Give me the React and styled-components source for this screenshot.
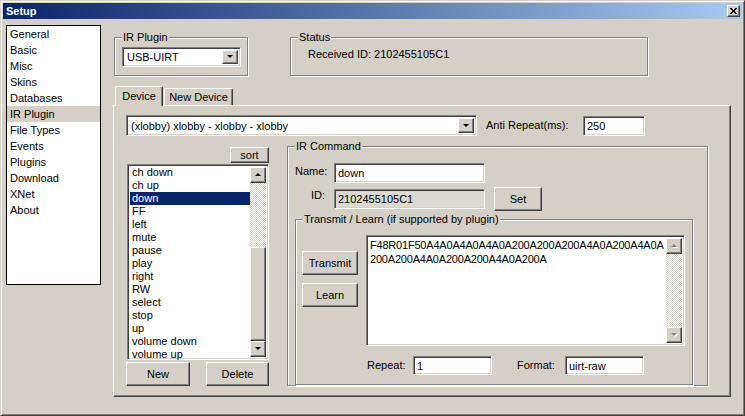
import React from 'react';
import styled, { createGlobalStyle } from 'styled-components';

const GlobalStyle = createGlobalStyle`
  * { box-sizing: border-box; }
  html, body { margin: 0; padding: 0; background: #d4d0c8; }
  body {
    font-family: "Liberation Sans", Arial, sans-serif;
    font-size: 11px;
    color: #000;
  }
`;

const raised = `
  border: 1px solid;
  border-color: #fff #404040 #404040 #fff;
  box-shadow: inset -1px -1px #808080;
  background: #d4d0c8;
`;

const sunken = `
  border: 1px solid;
  border-color: #808080 #fff #fff #808080;
  box-shadow: inset 1px 1px #404040, inset -1px -1px #d4d0c8;
`;

const Window = styled.div`
  width: 745px;
  height: 416px;
  display: flex;
  flex-direction: column;
  padding: 2px;
  border: 1px solid;
  border-color: #d4d0c8 #404040 #404040 #d4d0c8;
  box-shadow: inset 1px 1px #fff, inset -1px -1px #808080;
  background: #d4d0c8;
`;

const TitleBar = styled.div`
  height: 16px;
  display: flex;
  align-items: center;
  justify-content: space-between;
  padding: 0 2px 0 3px;
  background: linear-gradient(to right, #0a246a, #a6caf0);
  color: #fff;
  font-weight: bold;
`;

const CloseButton = styled.div`
  ${raised};
  width: 13px;
  height: 12px;
  display: flex;
  align-items: center;
  justify-content: center;
`;

const Body = styled.div`
  flex: 1;
  display: flex;
  padding: 6px 0 0 3px;
`;

const Nav = styled.div`
  width: 95px;
  height: 260px;
  border: 1px solid #000;
  background: #fff;
`;

const NavItem = styled.div`
  height: 16px;
  line-height: 16px;
  padding-left: 3px;
  background: ${(p) => (p.$active ? '#d4d0c8' : 'transparent')};
  white-space: nowrap;
`;

const Main = styled.div`
  margin-left: 12px;
  width: 618px;
  display: flex;
  flex-direction: column;
`;

const TopRow = styled.div`
  display: flex;
  gap: 42px;
  margin-top: 6px;
  padding-left: 1px;
`;

const Group = styled.fieldset`
  margin: 0;
  padding: 0;
  min-width: 0;
  width: ${(p) => p.$w}px;
  border: 1px solid #808080;
  box-shadow: inset 1px 1px #fff, 1px 1px #fff;
`;

const Legend = styled.legend`
  margin-left: 7px;
  padding: 0 1px;
  line-height: 13px;
  background: #d4d0c8;
`;

const GroupInner = styled.div`
  padding: ${(p) => p.$pad};
`;

const Combo = styled.div`
  ${sunken};
  background: #fff;
  width: ${(p) => p.$w}px;
  height: ${(p) => p.$h}px;
  display: flex;
  align-items: center;
  padding: 2px;
`;

const ComboText = styled.div`
  flex: 1;
  padding-left: 2px;
  white-space: nowrap;
  overflow: hidden;
`;

const ArrowButton = styled.div`
  ${raised};
  width: 16px;
  height: 100%;
  display: flex;
  align-items: center;
  justify-content: center;
`;

const StatusText = styled.div`
  line-height: 13px;
`;

const Tabs = styled.div`
  display: flex;
  align-items: flex-end;
  gap: 1px;
  margin-top: 10px;
  padding-left: 2px;
  position: relative;
  z-index: 1;
`;

const Tab = styled.div`
  width: ${(p) => p.$w}px;
  height: ${(p) => (p.$active ? 20 : 17)}px;
  margin-bottom: ${(p) => (p.$active ? -1 : 0)}px;
  padding-bottom: ${(p) => (p.$active ? 2 : 0)}px;
  display: flex;
  align-items: center;
  justify-content: center;
  background: #d4d0c8;
  border: 1px solid;
  border-bottom: none;
  border-color: #fff #404040 #fff #fff;
  border-radius: 2px 2px 0 0;
  box-shadow: inset -1px 0 #808080;
`;

const Panel = styled.div`
  width: 618px;
  height: 292px;
  padding: 9px 0 0 12px;
  border: 1px solid;
  border-color: #fff #404040 #404040 #fff;
  box-shadow: inset -1px -1px #808080;
`;

const Row = styled.div`
  display: flex;
  align-items: ${(p) => p.$align || 'center'};
  margin-top: ${(p) => p.$mt || 0}px;
`;

const Label = styled.div`
  width: ${(p) => p.$w}px;
  margin-left: ${(p) => p.$ml || 0}px;
  white-space: nowrap;
  line-height: 13px;
`;

const TextBox = styled.div`
  ${sunken};
  width: ${(p) => p.$w}px;
  height: ${(p) => p.$h || 20}px;
  background: ${(p) => (p.$disabled ? '#dcd9d3' : '#fff')};
  padding: 2px 3px;
  line-height: 15px;
  white-space: nowrap;
`;

const Button = styled.div`
  ${raised};
  width: ${(p) => p.$w}px;
  height: ${(p) => p.$h || 24}px;
  display: flex;
  align-items: center;
  justify-content: center;
`;

const LeftColumn = styled.div`
  width: 143px;
  display: flex;
  flex-direction: column;
`;

const SortButton = styled(Button)`
  align-self: flex-end;
  margin-top: 7px;
`;

const ListBox = styled.div`
  ${sunken};
  background: #fff;
  margin: 1px 0 0 1px;
  width: 142px;
  height: 196px;
  padding: 2px;
  display: flex;
`;

const ListItems = styled.div`
  flex: 1;
  margin-top: -1px;
`;

const ListItem = styled.div`
  height: 13px;
  line-height: 13px;
  padding-left: 2px;
  white-space: nowrap;
  background: ${(p) => (p.$selected ? '#0a246a' : 'transparent')};
  color: ${(p) => (p.$selected ? '#fff' : '#000')};
`;

const ScrollBar = styled.div`
  width: 16px;
  display: flex;
  flex-direction: column;
`;

const ScrollButton = styled.div`
  ${raised};
  height: 16px;
  display: flex;
  align-items: center;
  justify-content: center;
`;

const Track = styled.div`
  height: ${(p) => (p.$h ? `${p.$h}px` : 'auto')};
  flex: ${(p) => (p.$h ? 'none' : 1)};
  background: repeating-conic-gradient(#fff 0 25%, #d4d0c8 0 50%) 0 0 / 2px 2px;
`;

const Thumb = styled.div`
  ${raised};
  flex: 1;
`;

const ButtonRow = styled.div`
  display: flex;
  justify-content: space-between;
  margin-top: 2px;
`;

const CommandGrid = styled.div`
  display: grid;
  grid-template-columns: 30px 151px 48px;
  grid-template-rows: 20px 24px;
  column-gap: 9px;
  row-gap: 4px;
  align-items: center;
`;

const GridLabel = styled.div`
  align-self: start;
  padding-top: 2px;
  text-align: right;
  line-height: 13px;
`;

const LearnLayout = styled.div`
  display: flex;
  padding: 9px 0 9px 6px;
`;

const ActionColumn = styled.div`
  width: 56px;
  padding-top: 16px;
  display: flex;
  flex-direction: column;
  gap: 8px;
`;

const CodeColumn = styled.div`
  margin-left: 8px;
  width: 319px;
`;

const CodeArea = styled.div`
  ${sunken};
  background: #fff;
  height: 111px;
  padding: 2px;
  display: flex;
`;

const CodeText = styled.div`
  flex: 1;
  padding-left: 1px;
  line-height: 14px;
  white-space: nowrap;
  letter-spacing: -0.2px;
`;

const Arrow = ({ up, disabled }) => (
  <svg width="7" height="4" viewBox="0 0 7 4" style={{ overflow: 'visible' }}>
    {disabled && (
      <path
        d={up ? 'M1 4 L7 4 L4 1 Z' : 'M1 1 L7 1 L4 4 Z'}
        fill="#fff"
      />
    )}
    <path
      d={up ? 'M0 3 L6 3 L3 0 Z' : 'M0 0 L6 0 L3 3 Z'}
      fill={disabled ? '#808080' : '#000'}
    />
  </svg>
);

const navItems = [
  'General', 'Basic', 'Misc', 'Skins', 'Databases', 'IR Plugin',
  'File Types', 'Events', 'Plugins', 'Download', 'XNet', 'About',
];

const commands = [
  'ch down', 'ch up', 'down', 'FF', 'left', 'mute', 'pause', 'play',
  'right', 'RW', 'select', 'stop', 'up', 'volume down', 'volume up',
];

export default function App() {
  return (
    <>
      <GlobalStyle />
      <Window>
        <TitleBar>
          <span>Setup</span>
          <CloseButton>
            <svg width="7" height="6" viewBox="0 0 7 6">
              <path d="M0 0 L6 6 M1 0 L7 6 M6 0 L0 6 M7 0 L1 6" stroke="#000" strokeWidth="1" />
            </svg>
          </CloseButton>
        </TitleBar>
        <Body>
          <Nav>
            {navItems.map((n) => (
              <NavItem key={n} $active={n === 'IR Plugin'}>{n}</NavItem>
            ))}
          </Nav>
          <Main>
            <TopRow>
              <Group $w={134}>
                <Legend>IR Plugin</Legend>
                <GroupInner $pad="3px 5px 8px 7px">
                  <Combo $w={119} $h={20}>
                    <ComboText>USB-UIRT</ComboText>
                    <ArrowButton><Arrow /></ArrowButton>
                  </Combo>
                </GroupInner>
              </Group>
              <Group $w={358}>
                <Legend>Status</Legend>
                <GroupInner $pad="4px 0 0 17px">
                  <StatusText>Received ID: 2102455105C1</StatusText>
                </GroupInner>
              </Group>
            </TopRow>
            <Tabs>
              <Tab $active $w={48}>Device</Tab>
              <Tab $w={69}>New Device</Tab>
            </Tabs>
            <Panel>
              <Row>
                <Combo $w={351} $h={21}>
                  <ComboText>(xlobby) xlobby - xlobby - xlobby</ComboText>
                  <ArrowButton><Arrow /></ArrowButton>
                </Combo>
                <Label $w={97} $ml={9}>Anti Repeat(ms):</Label>
                <TextBox $w={62}>250</TextBox>
              </Row>
              <Row $align="flex-start" $mt={4}>
                <LeftColumn>
                  <SortButton $w={39} $h={16}>sort</SortButton>
                  <ListBox>
                    <ListItems>
                      {commands.map((c) => (
                        <ListItem key={c} $selected={c === 'down'}>{c}</ListItem>
                      ))}
                    </ListItems>
                    <ScrollBar>
                      <ScrollButton><Arrow up /></ScrollButton>
                      <Track $h={64} />
                      <Thumb />
                      <ScrollButton><Arrow /></ScrollButton>
                    </ScrollBar>
                  </ListBox>
                  <ButtonRow>
                    <Button $w={64}>New</Button>
                    <Button $w={63}>Delete</Button>
                  </ButtonRow>
                </LeftColumn>
                <Group $w={421} style={{ marginLeft: 18 }}>
                  <Legend>IR Command</Legend>
                  <GroupInner $pad="10px 13px 0 7px">
                    <CommandGrid>
                      <GridLabel>Name:</GridLabel>
                      <TextBox $w={151}>down</TextBox>
                      <div />
                      <GridLabel>ID:</GridLabel>
                      <TextBox $w={151} $disabled>2102455105C1</TextBox>
                      <Button $w={48}>Set</Button>
                    </CommandGrid>
                    <Group $w={398} style={{ marginTop: 2 }}>
                      <Legend>Transmit / Learn (if supported by plugin)</Legend>
                      <LearnLayout>
                        <ActionColumn>
                          <Button $w={56}>Transmit</Button>
                          <Button $w={56}>Learn</Button>
                        </ActionColumn>
                        <CodeColumn>
                          <CodeArea>
                            <CodeText>
                              F48R01F50A4A0A4A0A4A0A200A200A200A4A0A200A4A0A
                              <br />
                              200A200A4A0A200A200A4A0A200A
                            </CodeText>
                            <ScrollBar>
                              <ScrollButton><Arrow up disabled /></ScrollButton>
                              <Track />
                              <ScrollButton><Arrow disabled /></ScrollButton>
                            </ScrollBar>
                          </CodeArea>
                          <Row $mt={10}>
                            <Label $w={47} style={{ paddingLeft: 1 }}>Repeat:</Label>
                            <TextBox $w={79} $h={19}>1</TextBox>
                            <Label $w={48} $ml={25}>Format:</Label>
                            <TextBox $w={79} $h={19}>uirt-raw</TextBox>
                          </Row>
                        </CodeColumn>
                      </LearnLayout>
                    </Group>
                  </GroupInner>
                </Group>
              </Row>
            </Panel>
          </Main>
        </Body>
      </Window>
    </>
  );
}
